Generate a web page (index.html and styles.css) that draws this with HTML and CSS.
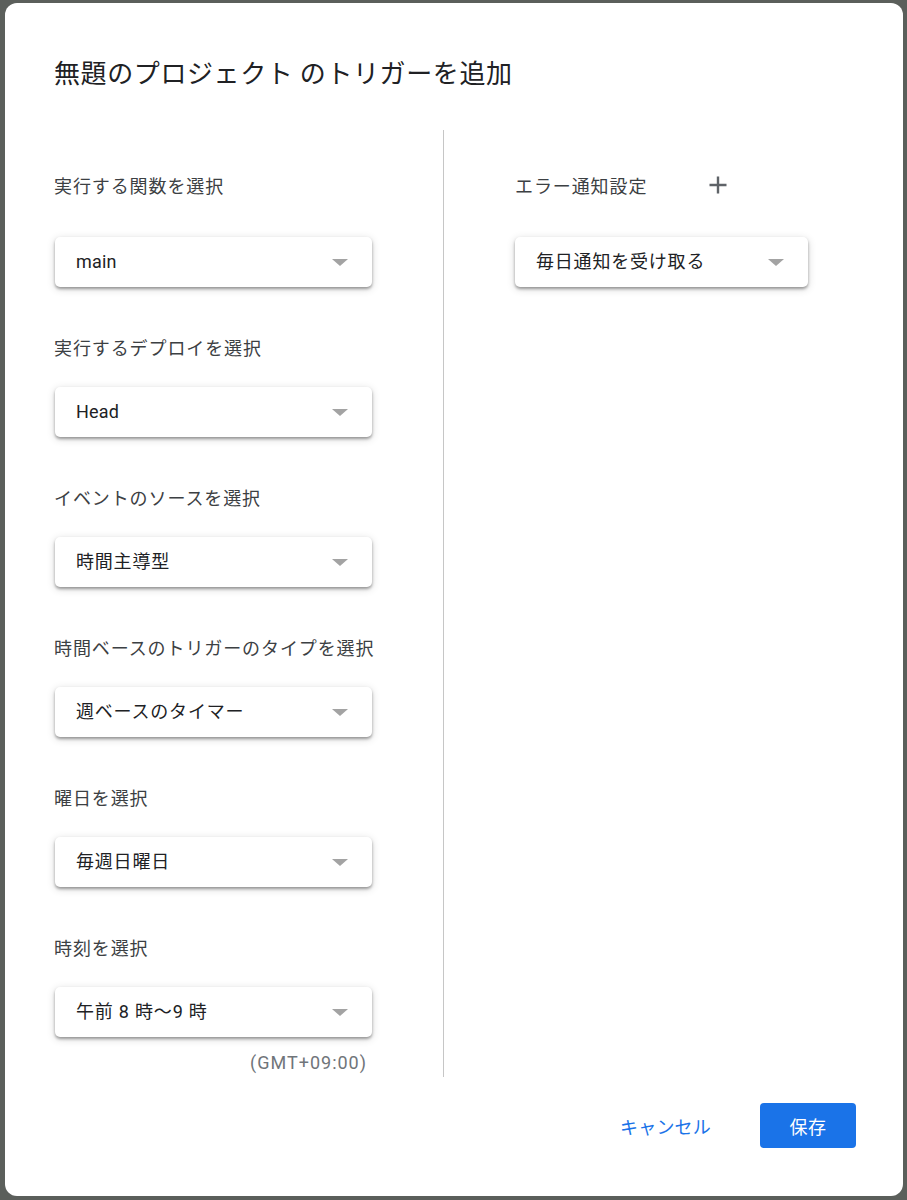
FILE: index.html
```html
<!DOCTYPE html>
<html lang="ja">
<head>
<meta charset="utf-8">
<title>トリガーを追加</title>
<link rel="stylesheet" href="styles.css">
</head>
<body>
<div class="card">
  <h1 class="title">無題のプロジェクト のトリガーを追加</h1>
  <div class="columns">
    <div class="col col-left">
      <div class="head-row"><span class="label">実行する関数を選択</span></div>
      <div class="select"><span class="value latin">main</span><span class="arrow"></span></div>

      <div class="label sec">実行するデプロイを選択</div>
      <div class="select"><span class="value latin">Head</span><span class="arrow"></span></div>

      <div class="label sec">イベントのソースを選択</div>
      <div class="select"><span class="value">時間主導型</span><span class="arrow"></span></div>

      <div class="label sec">時間ベースのトリガーのタイプを選択</div>
      <div class="select"><span class="value">週ベースのタイマー</span><span class="arrow"></span></div>

      <div class="label sec">曜日を選択</div>
      <div class="select"><span class="value">毎週日曜日</span><span class="arrow"></span></div>

      <div class="label sec">時刻を選択</div>
      <div class="select"><span class="value">午前 8 時〜9 時</span><span class="arrow"></span></div>
      <div class="tz">(GMT+09:00)</div>
    </div>
    <div class="col col-right">
      <div class="head-row">
        <span class="label">エラー通知設定</span>
        <span class="add-btn">
          <svg width="20" height="20" viewBox="0 0 20 20"><path d="M10 1.5v17M1.5 10h17" stroke="#5f6368" stroke-width="2.4" fill="none"/></svg>
        </span>
      </div>
      <div class="select select-right"><span class="value">毎日通知を受け取る</span><span class="arrow"></span></div>
    </div>
  </div>
  <div class="footer">
    <span class="btn-text">キャンセル</span>
    <span class="btn-primary">保存</span>
  </div>
</div>
</body>
</html>
```

FILE: styles.css
```css
html, body {
  margin: 0;
  padding: 0;
  background: #5b5f5b;
}
body {
  width: 907px;
  height: 1200px;
  overflow: hidden;
  font-family: Roboto, "Noto Sans CJK JP", sans-serif;
}
.card {
  box-sizing: border-box;
  margin: 3px 4px 0 5px;
  height: 1193px;
  background: #ffffff;
  border-radius: 12px;
  padding: 0 47px 0 49px;
  display: flex;
  flex-direction: column;
}
.title {
  margin: 53px 0 0 0;
  font-size: 26px;
  line-height: 32px;
  font-weight: 400;
  color: #202124;
  letter-spacing: 0.6px;
  white-space: nowrap;
  font-family: "Noto Sans CJK JP", sans-serif;
}
.columns {
  margin-top: 42px;
  height: 947px;
  flex-shrink: 0;
  display: flex;
}
.col {
  padding-top: 31px;
  display: flex;
  flex-direction: column;
}
.col > * {
  flex-shrink: 0;
}
.col-left {
  width: 318px;
  padding-right: 71px;
  border-right: 1px solid #c6c6c6;
}
.col-right {
  padding-left: 71px;
  flex: 1;
}
.head-row {
  height: 48px;
  display: flex;
  align-items: center;
  margin-bottom: 28px;
}
.label {
  font-family: "Noto Sans CJK JP", sans-serif;
  font-size: 18px;
  line-height: 24px;
  letter-spacing: 0.9px;
  color: #3c4043;
  white-space: nowrap;
}
.sec {
  margin-top: 48px;
  margin-bottom: 28px;
}
.select {
  box-sizing: border-box;
  height: 50px;
  width: 317px;
  margin-left: 1px;
  border-radius: 5px;
  background: #fff;
  box-shadow: 0 2px 3px rgba(0,0,0,0.34), 0 2px 9px rgba(0,0,0,0.16);
  display: flex;
  align-items: center;
  justify-content: space-between;
  padding: 0 24px 0 21px;
}
.select-right {
  width: 293px;
  margin-left: 0;
}
.value {
  font-size: 18px;
  line-height: 24px;
  letter-spacing: 0.8px;
  color: #202124;
  white-space: nowrap;
}
.value.latin {
  letter-spacing: 0.2px;
}
.arrow {
  width: 0;
  height: 0;
  border-left: 8px solid transparent;
  border-right: 8px solid transparent;
  border-top: 7px solid #a3a3a3;
  margin-top: 1px;
}
.tz {
  margin-top: 14px;
  align-self: flex-end;
  margin-right: 5px;
  font-size: 18px;
  line-height: 24px;
  color: #70757a;
  letter-spacing: 1px;
}
.add-btn {
  margin-left: 59px;
  width: 24px;
  height: 24px;
  display: flex;
  align-items: center;
  justify-content: center;
}
.footer {
  margin-top: 26px;
  display: flex;
  justify-content: flex-end;
  align-items: center;
}
.btn-text {
  font-family: "Noto Sans CJK JP", sans-serif;
  font-size: 18px;
  line-height: 24px;
  letter-spacing: 0.2px;
  color: #1a73e8;
  padding: 0 24px;
  margin-right: 25px;
}
.btn-primary {
  font-family: "Noto Sans CJK JP", sans-serif;
  width: 96px;
  height: 45px;
  border-radius: 4px;
  background: #1a73e8;
  color: #ffffff;
  font-size: 18px;
  letter-spacing: 0.5px;
  display: flex;
  align-items: center;
  justify-content: center;
}
```
